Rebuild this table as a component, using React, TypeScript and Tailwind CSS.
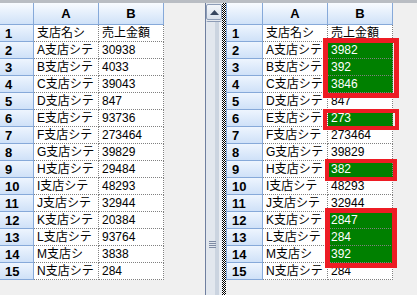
const leftRows = [
	["支店名シ", "売上金額"],
	["A支店シテ", "30938"],
	["B支店シテ", "4033"],
	["C支店シテ", "39043"],
	["D支店シテ", "847"],
	["E支店シテ", "93736"],
	["F支店シテ", "273464"],
	["G支店シテ", "39829"],
	["H支店シテ", "29484"],
	["I支店シテ", "48293"],
	["J支店シテ", "32944"],
	["K支店シテ", "20384"],
	["L支店シテ", "93764"],
	["M支店シ", "3838"],
	["N支店シテ", "284"],
]

const rightRows: [string, string, boolean][] = [
	["支店名シ", "売上金額", false],
	["A支店シテ", "3982", true],
	["B支店シテ", "392", true],
	["C支店シテ", "3846", true],
	["D支店シテ", "847", false],
	["E支店シテ", "273", true],
	["F支店シテ", "273464", false],
	["G支店シテ", "39829", false],
	["H支店シテ", "382", true],
	["I支店シテ", "48293", false],
	["J支店シテ", "32944", false],
	["K支店シテ", "2847", true],
	["L支店シテ", "284", true],
	["M支店シ", "392", true],
	["N支店シテ", "284", false],
]

const head =
	"flex items-center justify-center border-r border-b border-[#86a9d9] bg-gradient-to-b from-[#f8fbff] to-[#d0e2f8] font-bold text-[13px]"
const rowHead =
	"flex items-center pl-[5px] border-r border-b border-[#86a9d9] bg-gradient-to-b from-[#eef5fe] to-[#cfe1f8] font-bold text-[13px]"
const cell =
	"flex items-center pl-[3px] overflow-hidden whitespace-nowrap border-r border-b border-dotted border-[#808080] bg-white"

function Sheet({
	rows,
	cols,
	leftBorder,
}: {
	rows: [string, string, boolean?][]
	cols: string
	leftBorder?: boolean
}) {
	return (
		<div className={`grid ${cols} grid-rows-[22px_repeat(15,17px)] text-black leading-none`}>
			<div className={`${head} ${leftBorder ? "border-l" : ""}`} />
			<div className={head}>A</div>
			<div className={head}>B</div>
			{rows.map((r, i) => (
				<div key={i} className="contents">
					<div className={`${rowHead} ${leftBorder ? "border-l" : ""}`}>{i + 1}</div>
					<div className={`${cell} text-[12px]`}>{r[0]}</div>
					<div
						className={`${cell} text-[12px] ${r[2] ? "!bg-[#008000] text-white" : ""}`}
					>
						{r[1]}
					</div>
				</div>
			))}
		</div>
	)
}

export default function App() {
	return (
		<div
			className="relative w-[417px] h-[295px] overflow-hidden bg-[#f0f0f0] border-t-[3px] border-[#b9bdc3] flex"
			style={{ fontFamily: '"Liberation Sans", "Noto Sans CJK JP", sans-serif' }}
		>
			<div className="w-[205px] shrink-0">
				<Sheet rows={leftRows.map((r) => [r[0], r[1]])} cols="grid-cols-[34px_65px_65px]" />
			</div>

			{/* scrollbar */}
			<div className="w-[17px] shrink-0 border-l border-[#6f7f9f] bg-[#e4e8ee] flex flex-col">
				<div className="mt-[1px] mx-[0px] h-[16px] border border-[#8d9cb6] rounded-[2px] bg-gradient-to-b from-[#f3f6fa] to-[#d9e1ec] flex items-center justify-center">
					<svg width="9" height="5" viewBox="0 0 9 5">
						<path d="M0 5 L4.5 0 L9 5 Z" fill="#36455e" />
					</svg>
				</div>
				<div className="flex-1 mt-[1px] border-t border-[#8d9cb6] rounded-t-[2px] flex">
					<div className="w-[9px] bg-[#e2e7ee]" />
					<div className="w-[4px] bg-[#cbd4e0]" />
					<div className="flex-1 bg-[#e8ecf2]" />
				</div>
				<div className="absolute left-[209px] top-[238px] w-[7px] flex flex-col gap-[1px]">
					<div className="h-px bg-[#7d8aa3]" />
					<div className="h-px bg-[#7d8aa3]" />
					<div className="h-px bg-[#7d8aa3]" />
					<div className="h-px bg-[#7d8aa3]" />
				</div>
			</div>

			{/* splitter */}
			<div className="w-[4px] shrink-0 bg-[conic-gradient(#000_25%,#fff_0_50%,#000_0_75%,#fff_0)] bg-[length:2px_2px]" />

			<div className="flex-1">
				<Sheet rows={rightRows} cols="grid-cols-[37px_65px_65px]" leftBorder />
			</div>

			{/* red highlight boxes */}
			<div className="absolute left-[323px] top-[35px] w-[76px] h-[60px] border-[5px] border-[#ed1c24]" />
			<div className="absolute left-[323px] top-[106px] w-[76px] h-[21px] border-[4px] border-[#ed1c24]" />
			<div className="absolute left-[325px] top-[156px] w-[72px] h-[22px] border-[4px] border-[#ed1c24]" />
			<div className="absolute left-[325px] top-[205px] w-[72px] h-[60px] border-[5px] border-[#ed1c24]" />
		</div>
	)
}
